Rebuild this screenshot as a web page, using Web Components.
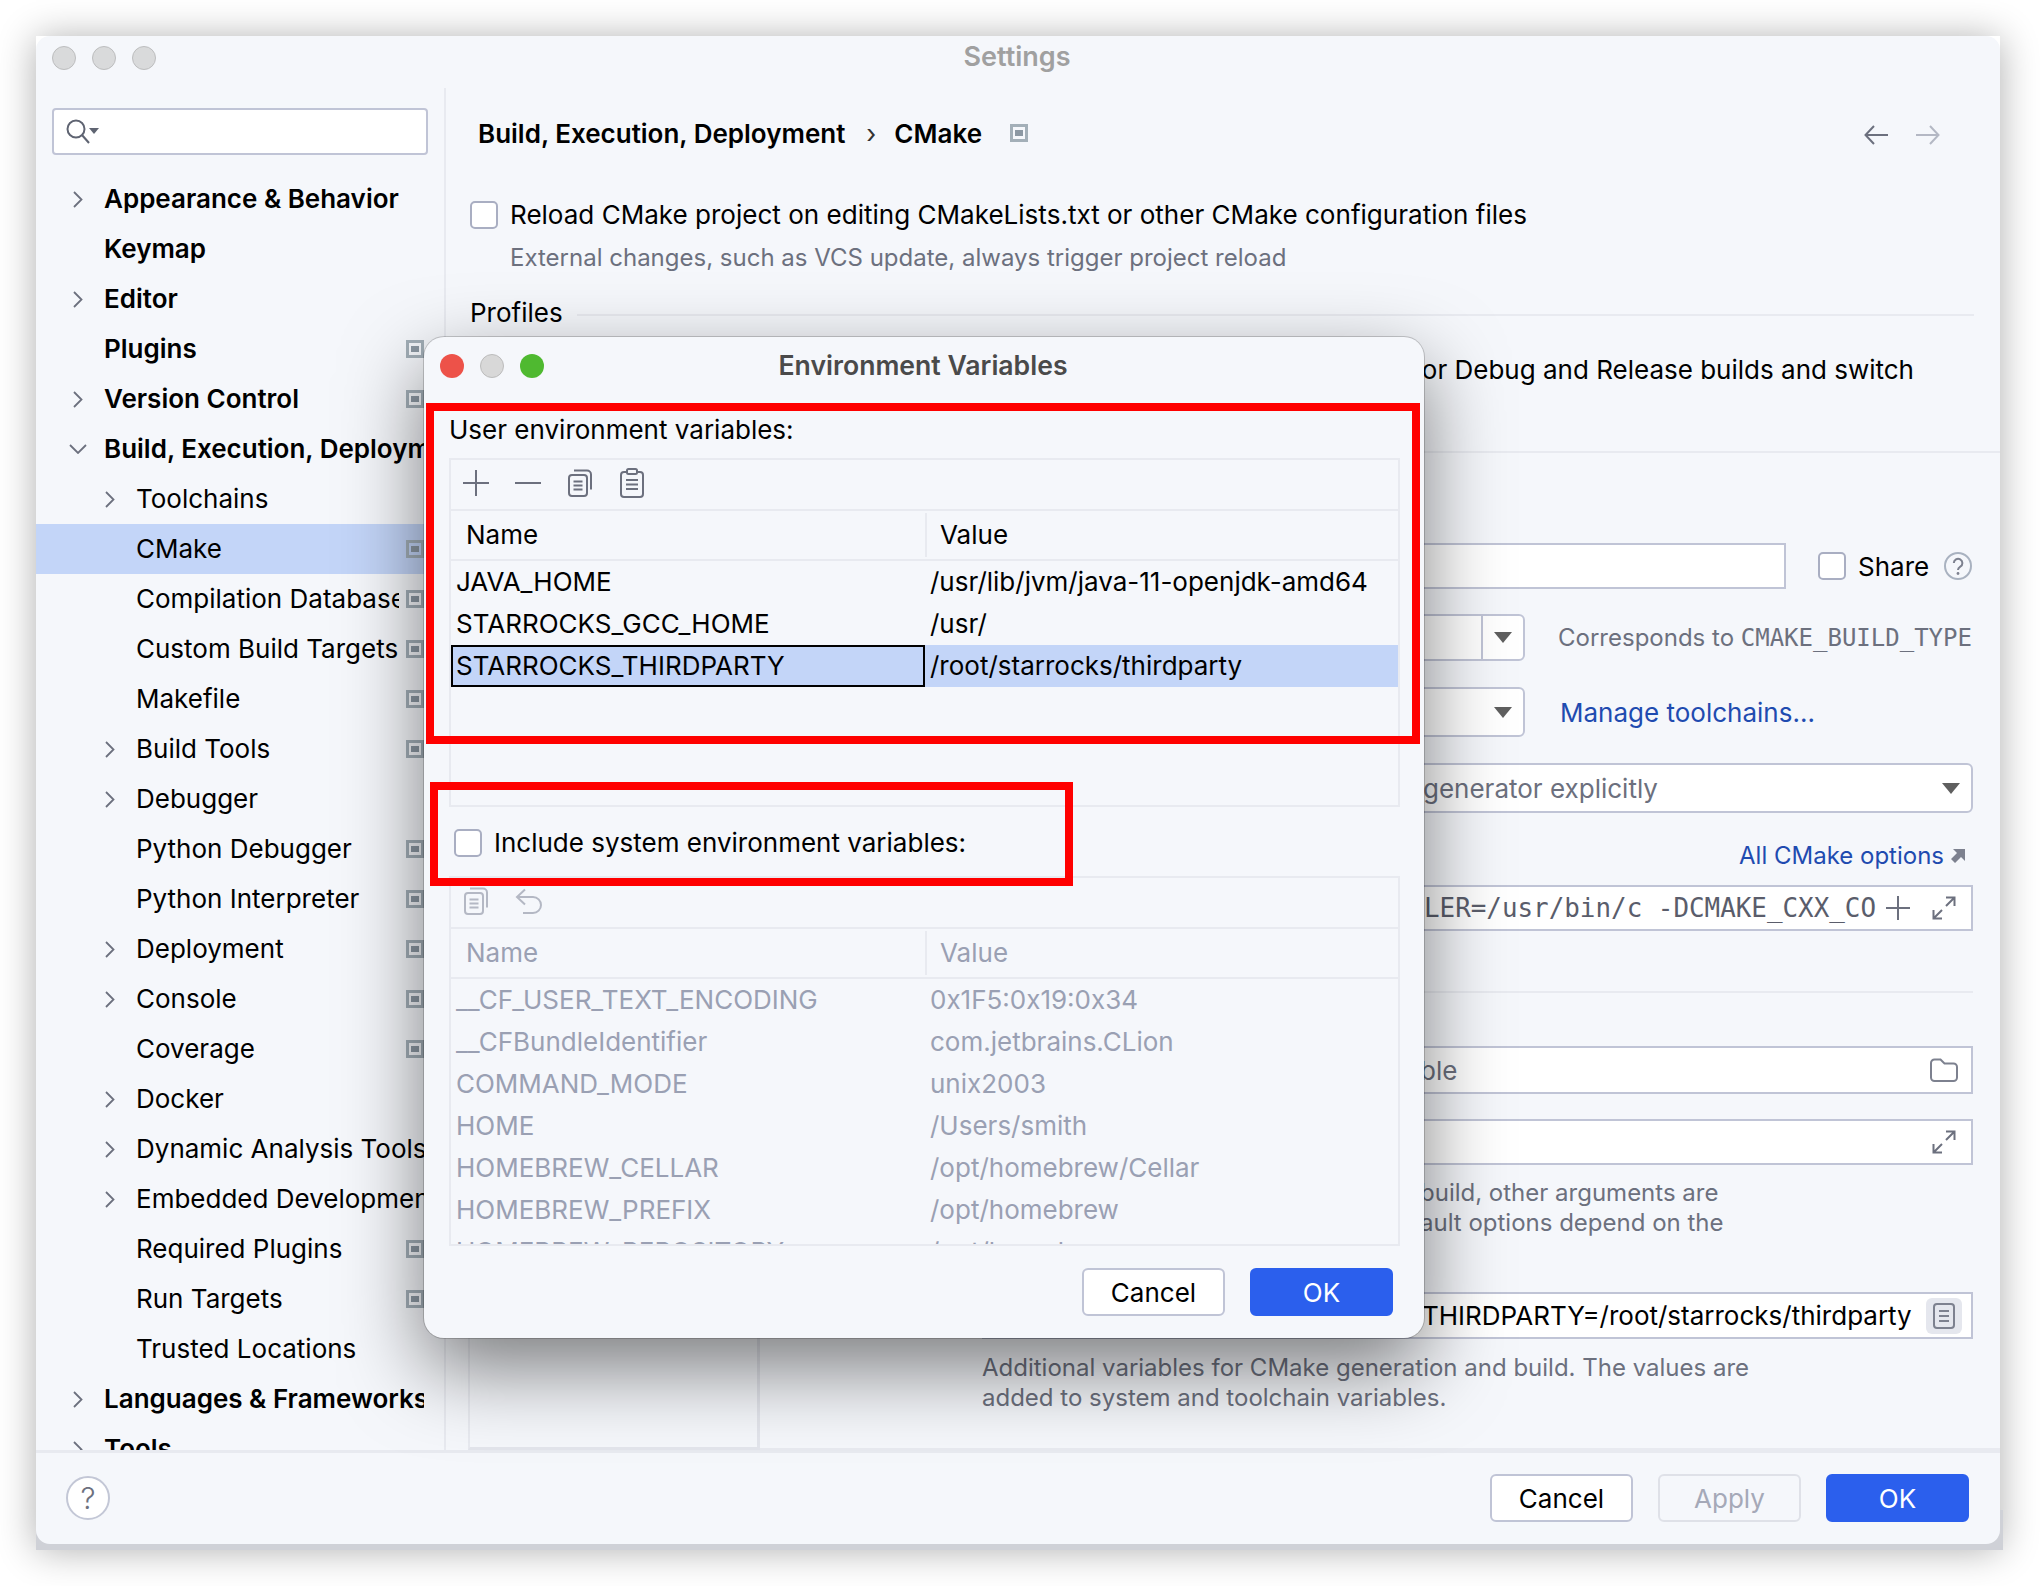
<!DOCTYPE html>
<html>
<head>
<meta charset="utf-8">
<title>Settings</title>
<style>
  html, body { margin: 0; padding: 0; background: #fff; }
  body { width: 2040px; height: 1586px; overflow: hidden; font-family: Inter, "Noto Sans", sans-serif; font-size: 26px; color: #000; }
</style>
</head>
<body>

<settings-window>
  <settings-sidebar slot="sidebar">
    <tree-row bold chevron="right">Appearance &amp; Behavior</tree-row>
    <tree-row bold>Keymap</tree-row>
    <tree-row bold chevron="right">Editor</tree-row>
    <tree-row bold badge>Plugins</tree-row>
    <tree-row bold chevron="right" badge>Version Control</tree-row>
    <tree-row bold chevron="down">Build, Execution, Deployment</tree-row>
    <tree-row level="1" chevron="right">Toolchains</tree-row>
    <tree-row level="1" selected badge>CMake</tree-row>
    <tree-row level="1" badge>Compilation Database</tree-row>
    <tree-row level="1" badge>Custom Build Targets</tree-row>
    <tree-row level="1" badge>Makefile</tree-row>
    <tree-row level="1" chevron="right" badge>Build Tools</tree-row>
    <tree-row level="1" chevron="right">Debugger</tree-row>
    <tree-row level="1" badge>Python Debugger</tree-row>
    <tree-row level="1" badge>Python Interpreter</tree-row>
    <tree-row level="1" chevron="right" badge>Deployment</tree-row>
    <tree-row level="1" chevron="right" badge>Console</tree-row>
    <tree-row level="1" badge>Coverage</tree-row>
    <tree-row level="1" chevron="right">Docker</tree-row>
    <tree-row level="1" chevron="right">Dynamic Analysis Tools</tree-row>
    <tree-row level="1" chevron="right">Embedded Development</tree-row>
    <tree-row level="1" badge>Required Plugins</tree-row>
    <tree-row level="1" badge>Run Targets</tree-row>
    <tree-row level="1">Trusted Locations</tree-row>
    <tree-row bold chevron="right">Languages &amp; Frameworks</tree-row>
    <tree-row bold chevron="right">Tools</tree-row>
  </settings-sidebar>

  <cmake-page slot="content"></cmake-page>

  <ide-button slot="footer">Cancel</ide-button>
  <ide-button slot="footer" disabled>Apply</ide-button>
  <ide-button slot="footer" primary>OK</ide-button>

  <env-dialog slot="overlay">
    <env-table slot="user" height="349">
      <env-row name="JAVA_HOME" value="/usr/lib/jvm/java-11-openjdk-amd64"></env-row>
      <env-row name="STARROCKS_GCC_HOME" value="/usr/"></env-row>
      <env-row name="STARROCKS_THIRDPARTY" value="/root/starrocks/thirdparty" selected></env-row>
    </env-table>
    <env-table slot="system" disabled height="370">
      <env-row name="__CF_USER_TEXT_ENCODING" value="0x1F5:0x19:0x34"></env-row>
      <env-row name="__CFBundleIdentifier" value="com.jetbrains.CLion"></env-row>
      <env-row name="COMMAND_MODE" value="unix2003"></env-row>
      <env-row name="HOME" value="/Users/smith"></env-row>
      <env-row name="HOMEBREW_CELLAR" value="/opt/homebrew/Cellar"></env-row>
      <env-row name="HOMEBREW_PREFIX" value="/opt/homebrew"></env-row>
      <env-row name="HOMEBREW_REPOSITORY" value="/opt/homebrew"></env-row>
    </env-table>
  </env-dialog>
</settings-window>

<script>
// shared bits of svg
const ICONS = {
  copy: `<svg width="26" height="28" viewBox="0 0 26 28" fill="none" stroke="currentColor" stroke-width="2"><rect x="2" y="6" width="18" height="21" rx="3"/><path d="M7 1.500h13a4 4 0 0 1 4 4v15"/><path d="M6.500 12.500h9M6.500 16.500h9M6.500 20.500h9"/></svg>`,
  paste: `<svg width="26" height="30" viewBox="0 0 26 30" fill="none" stroke="currentColor" stroke-width="2"><rect x="2" y="4" width="22" height="25" rx="3"/><rect x="8" y="1" width="10" height="5" rx="1.500" fill="#f5f7fb"/><path d="M7 12h12M7 16.500h12M7 21h12"/></svg>`,
  plus: `<svg width="26" height="26" viewBox="0 0 26 26" stroke="currentColor" stroke-width="2"><path d="M13 0v26M0 13h26"/></svg>`,
  minus: `<svg width="26" height="26" viewBox="0 0 26 26" stroke="currentColor" stroke-width="2"><path d="M0 13h26"/></svg>`,
  undo: `<svg width="28" height="26" viewBox="0 0 28 26" fill="none" stroke="currentColor" stroke-width="2"><path d="M10 1.500 2 9l8 7.500"/><path d="M2 9h16a8 8 0 0 1 0 16H8"/></svg>`,
  expand: `<svg width="24" height="24" viewBox="0 0 24 24" fill="none" stroke="#6c707e" stroke-width="2"><path d="M14 1.500h8.500V10M22 2 14 10"/><path d="M10 22.500H1.500V14M2 22l8-8"/></svg>`,
  folder: `<svg width="28" height="24" viewBox="0 0 28 24" fill="none" stroke="#7d818f" stroke-width="2"><path d="M1 5a3.500 3.500 0 0 1 3.500-3.500h6l4 4H23.500A3.500 3.500 0 0 1 27 9v10.500a3.500 3.500 0 0 1-3.500 3.500h-19A3.500 3.500 0 0 1 1 19.500z"/></svg>`,
  help: `<svg width="28" height="28" viewBox="0 0 28 28" fill="none"><circle cx="14" cy="14" r="13" stroke="#a9b2c0" stroke-width="2"/><path d="M9.800 11a4.300 4.300 0 1 1 6.500 3.700c-1.500.9-2.300 1.700-2.300 3.300" stroke="#7d818f" stroke-width="2"/><circle cx="14" cy="21.500" r="1.400" fill="#7d818f"/></svg>`,
  badge: `<svg width="18" height="18" viewBox="0 0 18 18" style="display:block"><rect x="1.500" y="1.500" width="15" height="15" fill="none" stroke="#a3afb8" stroke-width="3"/><rect x="5" y="6" width="8" height="6" fill="#8c98a3"/></svg>`
};

class SettingsWindow extends HTMLElement {
  constructor() {
    super();
    this.attachShadow({ mode: 'open' });
    this.shadowRoot.innerHTML = `
      <style>
        :host {
          display: block;
          position: relative;
          width: 1964px;
          height: 1508px;
          margin: 36px 0 0 36px;
        }
        .strip {
          position: absolute;
          left: 0;
          right: -3px;
          bottom: -6px;
          height: 40px;
          background: #cfd1d7;
        }
        .frame {
          position: absolute;
          inset: 0;
          background: #f5f7fb;
          border-radius: 14px;
          display: grid;
          grid-template-rows: 52px 1362px 1fr;
          overflow: hidden;
        }
        .shade {
          position: absolute;
          inset: 0 0 -4px 0;
          box-shadow: 0 2px 36px rgba(0,0,0,.32);
        }
        .title {
          display: flex;
          align-items: center;
          padding-left: 16px;
          gap: 16px;
          position: relative;
        }
        .dot {
          width: 24px;
          height: 24px;
          box-sizing: border-box;
          border-radius: 50%;
          background: #d9dadb;
          border: 1px solid #bcbdbe;
          margin-top: -8px;
        }
        .title span {
          position: absolute;
          left: -2px;
          right: 0;
          top: 7px;
          text-align: center;
          font-weight: 600;
          font-size: 27px;
          color: #a0a0a0;
          line-height: 28px;
        }
        .body { display: flex; min-height: 0; }
        .footer {
          border-top: 3px solid #e8eaf0;
          display: flex;
          justify-content: flex-end;
          gap: 25px;
          padding: 21px 31px 0 0;
          position: relative;
        }
        .help {
          position: absolute;
          left: 30px;
          top: 23px;
          width: 44px;
          height: 44px;
          border: 2px solid #c3c7d6;
          border-radius: 50%;
          background: #fff;
          box-sizing: border-box;
          display: flex;
          align-items: center;
          justify-content: center;
          font-size: 30px;
          font-weight: 300;
          color: #6c707e;
        }
      </style>
      <div class="shade"></div>
      <div class="strip"></div>
      <div class="frame">
        <div class="title">
          <div class="dot"></div><div class="dot"></div><div class="dot"></div>
          <span>Settings</span>
        </div>
        <div class="body">
          <slot name="sidebar"></slot>
          <slot name="content"></slot>
        </div>
        <div class="footer">
          <div class="help">?</div>
          <slot name="footer"></slot>
        </div>
      </div>
      <slot name="overlay"></slot>
    `;
  }
}

class SettingsSidebar extends HTMLElement {
  constructor() {
    super();
    this.attachShadow({ mode: 'open' });
    this.shadowRoot.innerHTML = `
      <style>
        :host {
          display: block;
          width: 410px;
          flex: none;
          overflow: hidden;
          position: relative;
        }
        .search {
          margin: 20px 0 19px 16px;
          width: 376px;
          height: 47px;
          box-sizing: border-box;
          background: #fff;
          border: 2px solid #c0c4d6;
          border-radius: 4px;
          display: flex;
          align-items: center;
          padding-left: 12px;
        }
        .search svg { display: block; }
        .rule {
          position: absolute;
          top: 0;
          right: 0;
          bottom: 0;
          width: 2px;
          background: #e8eaf0;
        }
      </style>
      <div class="search">
        <svg width="36" height="26" viewBox="0 0 36 26" fill="none">
          <circle cx="10" cy="10" r="8.500" stroke="#5f6472" stroke-width="2"/>
          <path d="m16 16 7 8" stroke="#5f6472" stroke-width="2"/>
          <path d="M23 9h10l-5 6z" fill="#5f6472"/>
        </svg>
      </div>
      <slot></slot>
      <div class="rule"></div>
    `;
  }
}

class TreeRow extends HTMLElement {
  constructor() {
    super();
    this.attachShadow({ mode: 'open' });
  }

  connectedCallback() {
    const level = Number(this.getAttribute('level') || 0);
    const chevron = this.getAttribute('chevron');
    let chev = '';
    if (chevron === 'right') {
      chev = `<svg width="10" height="17" viewBox="0 0 10 17" fill="none" stroke="#6c707e" stroke-width="1.800"><path d="m1 1 7.500 7.500L1 16"/></svg>`;
    } else if (chevron === 'down') {
      chev = `<svg width="18" height="10" viewBox="0 0 18 10" fill="none" stroke="#6c707e" stroke-width="1.800"><path d="m1 1 8 8 8-8"/></svg>`;
    }
    this.shadowRoot.innerHTML = `
      <style>
        :host {
          display: flex;
          align-items: center;
          height: 50px;
          padding-left: ${level ? 82 : 50}px;
          padding-right: 22px;
          background: ${this.hasAttribute('selected') ? '#c3d5f8' : 'transparent'};
          font-weight: ${this.hasAttribute('bold') ? 600 : 400};
        }
        .chev { width: 18px; flex: none; display: flex; justify-content: center; margin-left: -17px; padding-right: 17px; }
        .text { flex: 1; min-width: 0; overflow: hidden; white-space: nowrap; line-height: 34px; }
        .badge { flex: none; margin-left: 7px; }
      </style>
      <div class="chev">${chev}</div>
      <div class="text"><slot></slot></div>
      ${this.hasAttribute('badge') ? `<div class="badge">${ICONS.badge}</div>` : ''}
    `;
  }
}

class IdeButton extends HTMLElement {
  constructor() {
    super();
    this.attachShadow({ mode: 'open' });
    const primary = this.hasAttribute('primary');
    const disabled = this.hasAttribute('disabled');
    this.shadowRoot.innerHTML = `
      <style>
        :host {
          display: flex;
          align-items: center;
          justify-content: center;
          box-sizing: border-box;
          width: 143px;
          height: 48px;
          border-radius: 6px;
          border: 2px solid ${primary ? '#2b5fed' : disabled ? '#dfe1e8' : '#c0c4d6'};
          background: ${primary ? '#2b5fed' : disabled ? 'transparent' : '#fff'};
          color: ${primary ? '#fff' : disabled ? '#a5a9b8' : '#000'};
        }
      </style>
      <slot></slot>
    `;
  }
}

class IdeCheck extends HTMLElement {
  constructor() {
    super();
    this.attachShadow({ mode: 'open' });
    this.shadowRoot.innerHTML = `
      <style>
        :host { display: inline-flex; align-items: center; gap: 12px; }
        .box {
          width: 28px;
          height: 28px;
          box-sizing: border-box;
          border: 2px solid #a9aec2;
          border-radius: 5px;
          background: #fff;
          flex: none;
        }
      </style>
      <div class="box"></div>
      <slot></slot>
    `;
  }
}

// a text field or combo box; most of it sits under the dialog, so the
// text starts at the 'inset' distance from the left edge
class IdeField extends HTMLElement {
  constructor() {
    super();
    this.attachShadow({ mode: 'open' });
  }

  connectedCallback() {
    const inset = this.getAttribute('inset') || '440';
    const round = this.hasAttribute('combo') ? 6 : 0;
    this.shadowRoot.innerHTML = `
      <style>
        :host {
          display: flex;
          align-items: center;
          box-sizing: border-box;
          margin-left: 222px;
          background: #fff;
          border: 2px solid #c0c4d6;
          border-radius: ${round}px;
          padding-left: ${inset}px;
          white-space: nowrap;
          overflow: hidden;
        }
        .text { flex: 1; min-width: 0; overflow: hidden; }
        .end { display: flex; align-items: center; flex: none; }
      </style>
      <div class="text"><slot></slot></div>
      <div class="end"><slot name="end"></slot></div>
    `;
  }
}

class ComboArrow extends HTMLElement {
  constructor() {
    super();
    this.attachShadow({ mode: 'open' });
    this.shadowRoot.innerHTML = `
      <style>
        :host { display: block; width: 0; height: 0; border-left: 9px solid transparent; border-right: 9px solid transparent; border-top: 11px solid #5f5f5f; }
      </style>
    `;
  }
}

class CmakePage extends HTMLElement {
  constructor() {
    super();
    this.attachShadow({ mode: 'open' });
    this.shadowRoot.innerHTML = `
      <style>
        :host { display: flex; flex-direction: column; flex: 1; min-width: 0; color: #000; }
        .crumbs {
          height: 90px;
          display: flex;
          align-items: center;
          padding: 0 60px 0 32px;
          font-weight: 600;
        }
        .crumbs .sep { font-weight: 400; margin: 0 18px 0 21px; color: #333; }
        .crumbs .mark { margin-left: 28px; }
        .crumbs .nav { margin-left: auto; display: flex; gap: 28px; margin-top: 4px; }
        .reload { margin: 21px 0 0 24px; height: 28px; font-size: 26.050px; }
        .hint { margin: 17px 0 0 64px; height: 28px; line-height: 28px; color: #6c707e; font-size: 24px; }
        .group { margin: 27px 26px 0 24px; height: 28px; display: flex; align-items: center; gap: 14px; line-height: 28px; }
        .group i { flex: 1; height: 2px; background: #e8eaf0; margin-top: 4px; }
        .desc { margin-top: 29px; height: 28px; line-height: 28px; text-align: right; padding-right: 86px; }
        .section {
          margin: 67px 0 0 0;
          flex: 1;
          border-top: 2px solid #e8eaf0;
          display: flex;
          min-height: 0;
        }
        .list {
          width: 292px;
          margin-left: 22px;
          flex: none;
          border-left: 2px solid #e8eaf0;
          border-right: 3px solid #e3e5ec;
          border-bottom: 3px solid #e3e5ec;
          box-sizing: border-box;
        }
        .details { flex: 1; padding-right: 27px; display: flex; flex-direction: column; min-width: 0; border-bottom: 2px solid #e8eaf0; }
        .row { display: flex; align-items: center; }
        .gray { color: #6c707e; }
        .mono { font-family: "DejaVu Sans Mono", "Liberation Mono", monospace; }
        .link { color: #1f4bb0; }
        .name-row { margin-top: 90px; height: 46px; }
        .name-row ide-field { width: 804px; height: 46px; }
        .name-row ide-check { margin-left: 32px; }
        .name-row svg { margin-left: 15px; }
        .type-row { margin-top: 25px; height: 47px; }
        .type-row ide-field { width: 543px; height: 47px; }
        .type-row .note { margin-left: 33px; font-size: 24px; white-space: nowrap; }
        .tool-row { margin-top: 26px; height: 50px; }
        .tool-row ide-field { width: 543px; height: 50px; }
        .tool-row .link { margin-left: 35px; }
        .end-arrow { padding: 0 11px 0 13px; height: 100%; }
        .split { border-left: 2px solid #c0c4d6; height: 47px; display: flex; align-items: center; padding: 0 11px; margin-top: 0; }
        .gen { margin-top: 26px; height: 50px; border-radius: 6px; }
        .wide { height: 46px; }
        .options-link { margin-top: 29px; height: 28px; line-height: 28px; text-align: right; padding-right: 8px; display: flex; justify-content: flex-end; align-items: center; gap: 7px; font-size: 24px; }
        .sep-line { margin: 60px 0 0 222px; height: 2px; background: #e8eaf0; }
        .small { font-size: 24px; line-height: 30px; color: #6c707e; white-space: nowrap; }
      </style>
      <div class="crumbs">
        <span>Build, Execution, Deployment</span><span class="sep">›</span><span>CMake</span>
        <span class="mark">${ICONS.badge}</span>
        <span class="nav">
          <svg width="24" height="20" viewBox="0 0 24 20" fill="none" stroke="#6c707e" stroke-width="2"><path d="M24 10H2M10 1 1.500 10l8.500 9"/></svg>
          <svg width="24" height="20" viewBox="0 0 24 20" fill="none" stroke="#b4b8c4" stroke-width="2"><path d="M0 10h22M14 1l8.500 9-8.500 9"/></svg>
        </span>
      </div>
      <div class="reload"><ide-check>Reload CMake project on editing CMakeLists.txt or other CMake configuration files</ide-check></div>
      <div class="hint">External changes, such as VCS update, always trigger project reload</div>
      <div class="group"><span>Profiles</span><i></i></div>
      <div class="desc">or Debug and Release builds and switch</div>
      <div class="section">
        <div class="list"></div>
        <div class="details">
          <div class="row name-row">
            <ide-field></ide-field>
            <ide-check>Share</ide-check>
            ${ICONS.help}
          </div>
          <div class="row type-row">
            <ide-field combo>
              <div slot="end" class="split"><combo-arrow></combo-arrow></div>
            </ide-field>
            <span class="note gray">Corresponds to <span class="mono" style="font-size:24px">CMAKE_BUILD_TYPE</span></span>
          </div>
          <div class="row tool-row">
            <ide-field combo>
              <div slot="end" class="end-arrow" style="display:flex;align-items:center"><combo-arrow></combo-arrow></div>
            </ide-field>
            <span class="link">Manage toolchains...</span>
          </div>
          <ide-field combo class="gen" inset="439" style="color:#6c707e">generator explicitly
            <div slot="end" style="display:flex;align-items:center;padding-right:11px"><combo-arrow></combo-arrow></div>
          </ide-field>
          <div class="options-link"><span class="link">All CMake options</span>
            <svg width="14" height="14" viewBox="0 0 14 14"><path d="M2 0h12v12l-4-4-6 6-4-4 6-6z" fill="#7d818f"/></svg>
          </div>
          <ide-field class="wide mono" style="margin-top:15px;color:#5a5d6b;font-size:25.900px">LER=/usr/bin/c -DCMAKE_CXX_CO
            <div slot="end" style="display:flex;align-items:center;gap:22px;padding-right:15px">
              <svg width="24" height="24" viewBox="0 0 24 24" stroke="#6c707e" stroke-width="2"><path d="M12 0v24M0 12h24"/></svg>
              ${ICONS.expand}
            </div>
          </ide-field>
          <div class="sep-line"></div>
          <ide-field class="wide" inset="436" style="margin-top:53px;height:48px;color:#6c707e">ble
            <div slot="end" style="display:flex;align-items:center;padding-right:13px">${ICONS.folder}</div>
          </ide-field>
          <ide-field class="wide" style="margin-top:25px">
            <div slot="end" style="display:flex;align-items:center;padding-right:15px">${ICONS.expand}</div>
          </ide-field>
          <div class="small" style="margin:13px 0 0 660px">build, other arguments are</div>
          <div class="small" style="margin:0 0 0 660px">ault options depend on the</div>
          <ide-field class="wide" inset="438" style="margin-top:54px;height:47px">THIRDPARTY=/root/starrocks/thirdparty
            <div slot="end" style="display:flex;align-items:center;justify-content:center;width:36px;height:36px;background:#e5e7ee;border-radius:6px;margin:0 9px 0 10px">
              <svg width="22" height="26" viewBox="0 0 22 26" fill="none" stroke="#7d818f" stroke-width="2"><rect x="1" y="1" width="20" height="24" rx="3"/><path d="M6 8h10M6 13h10M6 18h10"/></svg>
            </div>
          </ide-field>
          <div class="small" style="margin:14px 0 0 222px">Additional variables for CMake generation and build. The values are</div>
          <div class="small" style="margin:0 0 0 222px">added to system and toolchain variables.</div>
        </div>
      </div>
    `;
  }
}

class EnvRow extends HTMLElement {
  constructor() {
    super();
    this.attachShadow({ mode: 'open' });
  }

  connectedCallback() {
    const selected = this.hasAttribute('selected');
    this.shadowRoot.innerHTML = `
      <style>
        :host {
          display: grid;
          grid-template-columns: 474px 1fr;
          height: 42px;
          line-height: 42px;
          white-space: nowrap;
          flex: none;
          background: ${selected ? '#c3d5f8' : 'transparent'};
        }
        .name { padding-left: 5px; box-sizing: border-box; }
        .name.sel { outline: 2px solid #000; outline-offset: -2px; }
        .value { padding-left: 5px; }
      </style>
      <div class="name ${selected ? 'sel' : ''}">${this.getAttribute('name')}</div>
      <div class="value">${this.getAttribute('value')}</div>
    `;
  }
}

class EnvTable extends HTMLElement {
  constructor() {
    super();
    this.attachShadow({ mode: 'open' });
  }

  connectedCallback() {
    const disabled = this.hasAttribute('disabled');
    const tools = disabled
      ? `<span style="margin-left:12px">${ICONS.copy}</span><span style="margin-left:26px">${ICONS.undo}</span>`
      : `<span style="margin-left:12px">${ICONS.plus}</span><span style="margin-left:26px">${ICONS.minus}</span><span style="margin-left:26px">${ICONS.copy}</span><span style="margin-left:26px">${ICONS.paste}</span>`;
    this.shadowRoot.innerHTML = `
      <style>
        :host {
          display: flex;
          flex-direction: column;
          box-sizing: border-box;
          width: 951px;
          height: ${this.getAttribute('height')}px;
          border: 2px solid #e8eaf0;
          overflow: hidden;
          color: ${disabled ? '#9aa0b3' : '#000'};
        }
        .tools {
          height: 49px;
          flex: none;
          display: flex;
          align-items: center;
          color: ${disabled ? '#b4b8c4' : '#6c707e'};
          border-bottom: 2px solid #e8eaf0;
        }
        .tools span { display: flex; margin-top: -3px; }
        .head {
          height: 48px;
          flex: none;
          display: grid;
          grid-template-columns: 474px 1fr;
          border-bottom: 2px solid #e8eaf0;
          line-height: 48px;
        }
        .head div { padding-left: 15px; }
        .head div + div { border-left: 2px solid #e8eaf0; height: 44px; margin-top: 2px; line-height: 44px; padding-left: 13px; }
      </style>
      <div class="tools">${tools}</div>
      <div class="head"><div>Name</div><div>Value</div></div>
      <div class="rows"><slot></slot></div>
    `;
  }
}

class EnvDialog extends HTMLElement {
  constructor() {
    super();
    this.attachShadow({ mode: 'open' });
    this.shadowRoot.innerHTML = `
      <style>
        :host {
          position: absolute;
          left: 388px;
          top: 301px;
          width: 1000px;
          height: 1001px;
          box-sizing: border-box;
          background: #f5f7fb;
          border-radius: 20px;
          box-shadow: 0 0 0 1px rgba(0,0,0,.18), 0 30px 80px rgba(0,0,0,.5);
          display: block;
        }
        .title { height: 58px; position: relative; display: flex; align-items: center; padding-left: 16px; gap: 16px; }
        .dot { width: 24px; height: 24px; border-radius: 50%; box-sizing: border-box; }
        .title span { position: absolute; left: -2px; right: 0; top: 13px; text-align: center; font-weight: 600; font-size: 26.600px; color: #4a4a4a; line-height: 30px; }
        .label { margin: 21px 0 0 25px; height: 28px; line-height: 28px; }
        .tbl { margin: 14px 0 0 25px; }
        .check { margin: 20px 0 0 30px; height: 28px; }
        .sys { margin: 21px 0 0 25px; }
        .buttons { display: flex; justify-content: flex-end; gap: 25px; padding-right: 31px; margin-top: 22px; }
        .red { position: absolute; border: 8px solid #ff0000; box-sizing: border-box; }
      </style>
      <div class="title">
        <div class="dot" style="background:#ed5249"></div>
        <div class="dot" style="background:#d8d8d8;border:1px solid #bcbcbc"></div>
        <div class="dot" style="background:#4fb930"></div>
        <span>Environment Variables</span>
      </div>
      <div class="label">User environment variables:</div>
      <div class="tbl"><slot name="user"></slot></div>
      <div class="check"><ide-check>Include system environment variables:</ide-check></div>
      <div class="sys"><slot name="system"></slot></div>
      <div class="buttons">
        <ide-button>Cancel</ide-button>
        <ide-button primary>OK</ide-button>
      </div>
      <div class="red" style="left:2px;top:66px;width:994px;height:341px"></div>
      <div class="red" style="left:6px;top:445px;width:643px;height:104px"></div>
    `;
  }
}

customElements.define('settings-window', SettingsWindow);
customElements.define('settings-sidebar', SettingsSidebar);
customElements.define('tree-row', TreeRow);
customElements.define('ide-button', IdeButton);
customElements.define('ide-check', IdeCheck);
customElements.define('ide-field', IdeField);
customElements.define('combo-arrow', ComboArrow);
customElements.define('cmake-page', CmakePage);
customElements.define('env-row', EnvRow);
customElements.define('env-table', EnvTable);
customElements.define('env-dialog', EnvDialog);
</script>
</body>
</html>
